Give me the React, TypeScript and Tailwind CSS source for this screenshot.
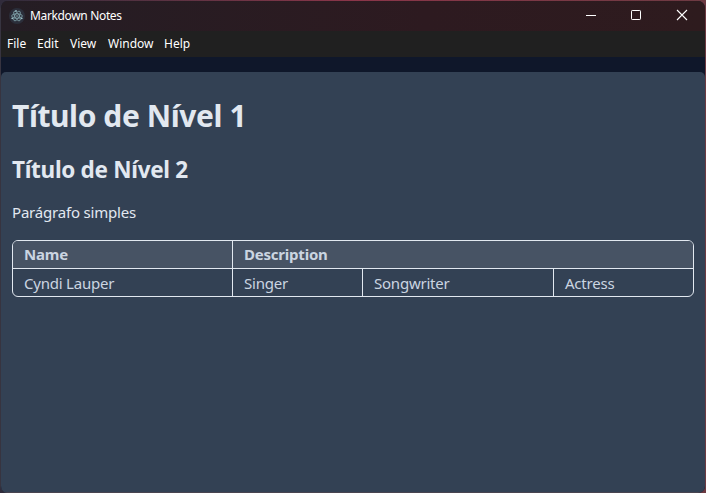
const menus = [
  { label: "File", width: "w-[30px]" },
  { label: "Edit", width: "w-[33px]" },
  { label: "View", width: "w-[38px]" },
  { label: "Window", width: "w-[56px]" },
  { label: "Help", width: "w-[30px]" },
];

function AppIcon() {
  return (
    <svg className="h-4 w-4 shrink-0" viewBox="0 0 16 16" fill="none">
      <circle cx="8" cy="8" r="8" fill="#2b2e3a" />
      <g stroke="#84a8b0" strokeWidth="0.8">
        <ellipse cx="8" cy="8" rx="5.4" ry="2.2" transform="rotate(0 8 8)" />
        <ellipse cx="8" cy="8" rx="5.4" ry="2.2" transform="rotate(60 8 8)" />
        <ellipse cx="8" cy="8" rx="5.4" ry="2.2" transform="rotate(120 8 8)" />
      </g>
      <g fill="#a5cbd2">
        <circle cx="8" cy="8" r="0.7" />
        <circle cx="3.2" cy="10.4" r="0.8" />
        <circle cx="12.8" cy="10.4" r="0.8" />
        <circle cx="7" cy="2.9" r="0.8" />
      </g>
    </svg>
  );
}

function TitleBar() {
  return (
    <header className="flex h-[30px] items-center bg-linear-to-r from-[#241d24] via-[#2d1a20] via-60% to-[#2e1b1e] pl-2">
      <AppIcon />
      <span className="ml-[5px] grow text-[12px] leading-4 tracking-[-0.35px] whitespace-nowrap text-white">
        Markdown Notes
      </span>
      <div className="flex items-center text-white">
        <svg className="h-[30px] w-[45px]" viewBox="0 0 45 30" shapeRendering="crispEdges">
          <path d="M17 14.5h10" stroke="currentColor" />
        </svg>
        <svg className="h-[30px] w-[46px]" viewBox="0 0 46 30" fill="none">
          <rect x="17.5" y="9.5" width="9" height="9" rx="0.7" stroke="currentColor" />
        </svg>
        <svg className="h-[30px] w-[45px]" viewBox="0 0 45 30" fill="none">
          <path d="M17 9l10 10M27 9L17 19" stroke="currentColor" strokeWidth="1.1" />
        </svg>
      </div>
    </header>
  );
}

function MenuBar() {
  return (
    <nav className="flex h-[26px] items-center bg-[#202020] pl-1.5 text-[12px] leading-4 text-white">
      {menus.map((m) => (
        <span key={m.label} className={`${m.width} whitespace-nowrap`}>
          {m.label}
        </span>
      ))}
    </nav>
  );
}

function NotesTable() {
  return (
    <div className="mt-[17px] flex h-[57px] flex-col overflow-hidden rounded-[6px] border border-[#e2e8f0] text-[15px] leading-[27px] tracking-[-0.22px] text-[#cbd5e1]">
      <div className="flex h-7 border-b border-[#e2e8f0] bg-[#475364] font-bold">
        <div className="w-[220px] border-r border-[#e2e8f0] pl-[11px]">Name</div>
        <div className="pl-[11px]">Description</div>
      </div>
      <div className="flex h-[27px] leading-[29px]">
        <div className="w-[220px] border-r border-[#e2e8f0] pl-[11px]">Cyndi Lauper</div>
        <div className="w-[130px] border-r border-[#e2e8f0] pl-[11px]">Singer</div>
        <div className="w-[191px] border-r border-[#e2e8f0] pl-[11px]">Songwriter</div>
        <div className="pl-[11px]">Actress</div>
      </div>
    </div>
  );
}

export default function App() {
  return (
    <div className="h-[493px] w-[706px] overflow-hidden bg-linear-to-r from-[#302b3b] via-[#8b3549] to-[#6d3a42] pt-px pr-px font-['Noto_Sans',sans-serif]">
      <div className="flex h-full flex-col overflow-hidden rounded-[7px] border-l border-[#373440] bg-[#0f172a]">
        <TitleBar />
        <MenuBar />
        <main className="mt-[15px] grow rounded-t-[5px] border-b border-[#494450] bg-[#334154] px-[11px] text-[#e2e8f0]">
          <h1 className="mt-[23px] text-[30px] leading-[42px] font-bold tracking-[-0.42px]">Título de Nível 1</h1>
          <h2 className="mt-[18px] text-[22.5px] leading-[30px] font-bold tracking-[-0.3px]">Título de Nível 2</h2>
          <p className="mt-[16px] text-[15px] leading-[22px] tracking-[-0.2px]">Parágrafo simples</p>
          <NotesTable />
        </main>
      </div>
    </div>
  );
}
